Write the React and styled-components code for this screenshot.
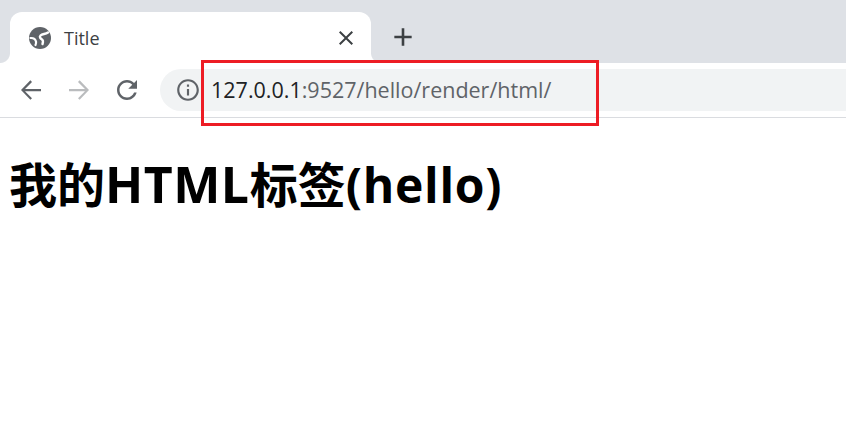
import React from "react";
import styled, { createGlobalStyle } from "styled-components";

const GlobalStyle = createGlobalStyle`
  html, body {
    margin: 0;
    padding: 0;
    background: #fff;
    overflow: hidden;
  }
`;

const Window = styled.div`
  position: relative;
  width: 846px;
  height: 427px;
  background: #fff;
  font-family: "Open Sans", "Noto Sans CJK SC", sans-serif;
`;

const TabStrip = styled.div`
  display: flex;
  align-items: flex-end;
  height: 63px;
  padding-left: 10px;
  background: #dee1e6;
`;

const Tab = styled.div`
  position: relative;
  display: flex;
  align-items: center;
  width: 361px;
  height: 51px;
  box-sizing: border-box;
  padding: 0 13px 0 18px;
  background: #fff;
  border-radius: 12px 12px 0 0;
  color: #5f6368;

  &::before,
  &::after {
    content: "";
    position: absolute;
    bottom: 0;
    width: 10px;
    height: 10px;
  }
  &::before {
    left: -10px;
    background: radial-gradient(circle at 0 0, #dee1e6 9.5px, #fff 10.5px);
  }
  &::after {
    right: -10px;
    background: radial-gradient(circle at 100% 0, #dee1e6 9.5px, #fff 10.5px);
  }
`;

const TabTitle = styled.span`
  flex: 1;
  margin-left: 12px;
  font-size: 18px;
  color: #3c4043;
`;

const CloseButton = styled.div`
  display: flex;
  color: #3c4043;
`;

const NewTab = styled.div`
  display: flex;
  margin: 0 0 13px 19px;
  color: #3c4043;
`;

const Toolbar = styled.div`
  display: flex;
  align-items: center;
  height: 55px;
  box-sizing: border-box;
  padding-left: 16px;
  border-bottom: 1px solid #dadce0;
`;

const NavButton = styled.div`
  display: flex;
  margin-right: 18px;
  color: ${props => (props.disabled ? "#babcbe" : "#5f6368")};
`;

const Omnibox = styled.div`
  flex: 1;
  display: flex;
  align-items: center;
  height: 42px;
  padding-left: 15px;
  background: #f1f3f4;
  border-radius: 21px 0 0 21px;
  color: #5f6368;
`;

const Url = styled.div`
  margin: 0 0 2px 10px;
  font-size: 21.5px;
  color: #5f6368;
  white-space: nowrap;
`;

const Host = styled.span`
  color: #202124;
`;

const Highlight = styled.div`
  position: absolute;
  left: 201px;
  top: 60px;
  width: 398px;
  height: 66px;
  box-sizing: border-box;
  border: 3px solid #ed1c24;
`;

const Heading = styled.h1`
  margin: 34px 0 0 9px;
  font-size: 48px;
  line-height: 64px;
  font-weight: 700;
  color: #000;
`;

const Latin = styled.span`
  font-size: ${props => props.size}px;
  letter-spacing: ${props => props.spacing}px;
`;

const Icon = ({ size = 24, d }) => (
  <svg width={size} height={size} viewBox="0 0 24 24" fill="currentColor">
    <path d={d} />
  </svg>
);

const GlobeIcon = () => (
  <svg width="24" height="24" viewBox="0 0 24 24" fill="none">
    <circle cx="12" cy="12" r="11" fill="currentColor" />
    <path d="M20 6.500C17 8.500 14.500 7.500 12.500 9.500C11 11 12.500 12.500 14 13.500C15.500 14.500 15 16.500 14.500 18" stroke="#fff" strokeWidth="2.400" strokeLinecap="round" />
    <path d="M2.500 12C5.500 11.800 7.500 13.500 8 15.500C8.300 17 8 18 7.500 19" stroke="#fff" strokeWidth="2.200" strokeLinecap="round" />
  </svg>
);

const BACK = "M20 11.100H7.200l5.600-5.600L11.500 4.200 4 12l7.500 7.800 1.300-1.300-5.600-5.600H20z";
const FORWARD = "M4 11.100h12.800l-5.600-5.600 1.300-1.300L20 12l-7.500 7.800-1.300-1.300 5.600-5.600H4z";
const RELOAD =
  "M17.65 6.35C16.2 4.9 14.21 4 12 4c-4.42 0-7.99 3.58-7.99 8s3.57 8 7.99 8c3.73 0 6.84-2.55 7.73-6h-2.08c-.82 2.33-3.04 4-5.65 4-3.31 0-6-2.69-6-6s2.69-6 6-6c1.66 0 3.14.69 4.22 1.78L13 11h7V4l-2.35 2.35z";
const INFO =
  "M11 7h2v2h-2zm0 4h2v6h-2zm1-9C6.48 2 2 6.48 2 12s4.48 10 10 10 10-4.48 10-10S17.52 2 12 2zm0 18c-4.41 0-8-3.59-8-8s3.59-8 8-8 8 3.59 8 8-3.59 8-8 8z";
const CLOSE = "M19 6.41 17.590 5 12 10.590 6.410 5 5 6.410 10.590 12 5 17.590 6.410 19 12 13.410 17.590 19 19 17.590 13.410 12z";
const PLUS = "M20 13.200h-6.800V20h-2.400v-6.800H4v-2.400h6.800V4h2.400v6.800H20z";

const App = () => (
  <Window>
    <GlobalStyle />
    <TabStrip>
      <Tab>
        <GlobeIcon />
        <TabTitle>Title</TabTitle>
        <CloseButton>
          <Icon d={CLOSE} />
        </CloseButton>
      </Tab>
      <NewTab>
        <Icon size={26} d={PLUS} />
      </NewTab>
    </TabStrip>
    <Toolbar>
      <NavButton>
        <Icon size={30} d={BACK} />
      </NavButton>
      <NavButton disabled>
        <Icon size={30} d={FORWARD} />
      </NavButton>
      <NavButton>
        <Icon size={30} d={RELOAD} />
      </NavButton>
      <Omnibox>
        <Icon size={26} d={INFO} />
        <Url>
          <Host>127.0.0.1</Host>:9527/hello/render/html/
        </Url>
      </Omnibox>
    </Toolbar>
    <Heading>
      我的<Latin size={50} spacing={0.5}>HTML</Latin>标签<Latin size={48} spacing={0.75}>(hello)</Latin>
    </Heading>
    <Highlight />
  </Window>
);

export default App;
